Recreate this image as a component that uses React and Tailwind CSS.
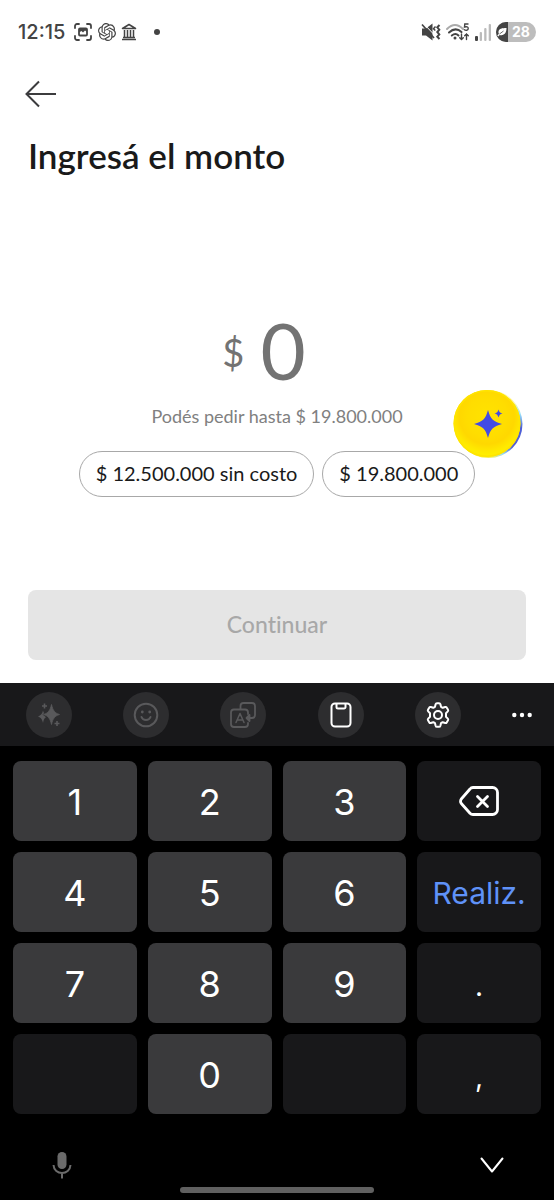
import React from "react";
import { SiOpenai } from "react-icons/si";

const CaptureIcon = () => (
  <svg width="20" height="20" viewBox="0 0 20 20" fill="none" stroke="#444" strokeWidth="1.800" strokeLinecap="round" aria-hidden="true">
    <path d="M2 6V4a2 2 0 0 1 2-2h2M14 2h2a2 2 0 0 1 2 2v2M18 14v2a2 2 0 0 1-2 2h-2M6 18H4a2 2 0 0 1-2-2v-2" />
    <rect x="6" y="6.500" width="8" height="7" rx="1" fill="#fff" />
    <path d="M6 7h8v3l-2-1.500-2 2-1.500-1.500-2.500 1.500z" fill="#444" stroke="none" />
  </svg>
);

const BankIcon = () => (
  <svg width="16" height="18" viewBox="0 0 16 18" fill="none" stroke="#444" aria-hidden="true">
    <path d="M1.500 5.500 8 1.500l6.500 4z" strokeWidth="1.500" strokeLinejoin="round" />
    <path d="M3.500 7v7M6.500 7v7M9.500 7v7M12.500 7v7" strokeWidth="1.500" />
    <path d="M2 14.500h12M1 16.500h14" strokeWidth="1.300" />
  </svg>
);

const MuteIcon = () => (
  <svg width="20" height="20" viewBox="0 0 20 20" fill="none" stroke="#444" aria-hidden="true">
    <path d="M1 6.500h4l6.500-5v17L5 13.500H1z" fill="#444" stroke="none" />
    <path d="M2.500 1.500l10.500 11" stroke="#fff" strokeWidth="1" />
    <path d="M1 2.500l12 13.500" strokeWidth="1.700" />
    <path d="M14.500 4.500l-2 2.200 1.800 1.800" strokeWidth="1.500" />
    <path d="M18.500 3l-2.200 2.300 2 2.400-2 2.300 2 2.400-2 2.300 2.200 2.300" strokeWidth="2" />
  </svg>
);

const WifiIcon = () => (
  <svg width="26" height="20" viewBox="0 0 26 20" fill="none" strokeLinecap="round" aria-hidden="true">
    <path d="M2 7q8-8 16 0" stroke="#aaa" strokeWidth="2" />
    <path d="M4 10.500q6.500-6 12.500-.5M6.800 13.500q3.700-3 6.700 0" stroke="#444" strokeWidth="2" />
    <circle cx="10" cy="16" r="1.500" fill="#444" />
    <path d="M16.500 12v5.500M14.700 15.800l1.800 1.800 1.800-1.800M21.500 17.500V12M19.700 13.800l1.800-1.800 1.800 1.800" stroke="#444" strokeWidth="1.400" />
    <path d="M23 2h-3.200l-.3 3c3-.8 3.900.2 3.700 1.800-.3 1.600-2.400 2-3.800.9" stroke="#444" strokeWidth="1.400" />
  </svg>
);

const SignalIcon = () => (
  <svg width="17" height="18" viewBox="0 0 17 18" aria-hidden="true">
    <rect x="0" y="13" width="3" height="5" rx="1" fill="#444" />
    <rect x="4.700" y="9" width="2.300" height="9" rx="1" fill="#bbb" />
    <rect x="9.200" y="5" width="2.300" height="13" rx="1" fill="#bbb" />
    <rect x="13.700" y="1" width="2.300" height="17" rx="1" fill="#bbb" />
  </svg>
);

const LeafIcon = () => (
  <svg width="10" height="10" viewBox="0 0 10 10" aria-hidden="true">
    <path d="M9.500 1C5 1 2 1.500 1.500 4.500c-.2 1 0 1.600.4 2.200L.3 8.600l.9.800 1.500-1.500C7 9 9.500 6 9.500 1z" fill="#fff" />
    <path d="M2.500 7 6.500 4" stroke="#444" strokeWidth=".8" />
  </svg>
);

const BackIcon = () => (
  <svg width="32" height="28" viewBox="0 0 32 28" fill="none" stroke="#3c3c3e" strokeWidth="2" aria-hidden="true">
    <path d="M32 14H2.500M15 1.500 2.500 14 15 26.500" />
  </svg>
);

const AssistantIcon = () => (
  <svg width="70" height="70" viewBox="0 0 70 70" aria-hidden="true">
    <defs>
      <radialGradient id="coin" cx=".5" cy=".4" r=".6">
        <stop offset="0" stopColor="#ffe300" />
        <stop offset=".5" stopColor="#ffdd00" />
        <stop offset=".68" stopColor="#ffd800" />
        <stop offset=".85" stopColor="#ffe800" />
        <stop offset="1" stopColor="#fff200" />
      </radialGradient>
      <linearGradient id="edge" x1=".7" y1="0" x2=".55" y2="1">
        <stop offset=".15" stopColor="#fff6a0" />
        <stop offset=".3" stopColor="#9be4fa" />
        <stop offset=".5" stopColor="#4c5fd8" />
        <stop offset=".8" stopColor="#5560d0" />
        <stop offset=".92" stopColor="#9bdcf5" />
        <stop offset="1" stopColor="#f4ee60" />
      </linearGradient>
    </defs>
    <circle cx="35.500" cy="35" r="34" fill="url(#edge)" />
    <circle cx="34" cy="34.500" r="33.500" fill="url(#coin)" />
    <circle cx="34" cy="34.500" r="32.700" fill="none" stroke="#ffe400" strokeWidth="1.500" />
    <path d="M35 21c2.500 9 5 11.500 14 14-9 2.500-11.500 5-14 14-2.500-9-5-11.500-14-14 9-2.500 11.500-5 14-14z" fill="#434be4" />
    <path d="M45.500 20.500c.8 2.700 1.500 3.300 4 4-2.500.8-3.200 1.500-4 4-.8-2.500-1.500-3.200-4-4 2.500-.7 3.200-1.300 4-4z" fill="#434be4" />
  </svg>
);

const SparklesIcon = () => (
  <svg width="26" height="26" viewBox="0 0 26 26" fill="#59595b" aria-hidden="true">
    <path d="M15.500 2.500c1.400 6 3.200 8.500 8 10-4.800 1.500-6.600 4-8 10-1.400-6-3.200-8.500-8-10 4.800-1.500 6.600-4 8-10z" strokeLinejoin="round" stroke="#59595b" strokeWidth=".8" />
    <path d="M7 8.500c.4 1.800.8 2.300 1.300 2.500L6.500 12.500l2 1.500 1.500 1.200c-1.700.8-2.300 2.500-3 5.800-.9-4-2-5.300-5-6.500 3-1.200 4.200-2.500 5-6z" />
    <path d="M8.500 1.500v5M6 4h5M21 19v5M18.500 21.500h5" stroke="#59595b" strokeWidth="1.600" />
  </svg>
);

const SmileIcon = () => (
  <svg width="26" height="26" viewBox="0 0 26 26" fill="none" stroke="#59595b" strokeWidth="2" strokeLinecap="round" aria-hidden="true">
    <circle cx="13" cy="13" r="11.300" />
    <path d="M8.500 15c1.500 4 7.500 4 9 0" />
    <circle cx="9.300" cy="10" r="1.400" fill="#59595b" stroke="none" />
    <circle cx="16.700" cy="10" r="1.400" fill="#59595b" stroke="none" />
  </svg>
);

const TranslateIcon = () => (
  <svg width="28" height="28" viewBox="0 0 28 28" fill="none" stroke="#59595b" strokeWidth="1.800" strokeLinecap="round" strokeLinejoin="round" aria-hidden="true">
    <path d="M11.500 8V5a3 3 0 0 1 3-3H23a3 3 0 0 1 3 3v9a3 3 0 0 1-3 3h-2.500" />
    <path d="M19 13v-1.500a3 3 0 0 0-3-3H5a3 3 0 0 0-3 3V23a3 3 0 0 0 3 3h11a3 3 0 0 0 3-3v-1" />
    <path d="M7 21.500 11 12.500l4 9M8.500 19h5" strokeWidth="1.500" />
    <path d="M20.500 14 17.500 17l3 3z" fill="#59595b" />
  </svg>
);

const ClipboardIcon = () => (
  <svg width="22" height="26" viewBox="0 0 22 26" fill="none" stroke="#fff" strokeWidth="2" strokeLinejoin="round" aria-hidden="true">
    <rect x="1.500" y="1.500" width="19" height="23" rx="3.500" />
    <path d="M6.500 2v3a1.500 1.500 0 0 0 1.500 1.500h6A1.500 1.500 0 0 0 15.500 5V2" />
  </svg>
);

const GearIcon = () => (
  <svg width="26" height="26" viewBox="0 0 26 26" fill="none" stroke="#fff" strokeWidth="2" strokeLinejoin="round" aria-hidden="true">
    <circle cx="13" cy="13" r="4" />
    <path d="M10.600 2.300q.3-1.100 1.400-1.100h2q1.100 0 1.400 1.100l.6 2.500 1.700 1 2.500-.8q1-.3 1.500.6l1.300 2.200q.5.900-.2 1.600L21 11.200v3.600l1.800 1.800q.7.700.2 1.600l-1.300 2.200q-.5.900-1.500.6l-2.500-.8-1.700 1-.6 2.500q-.3 1.100-1.400 1.100h-2q-1.100 0-1.400-1.100l-.6-2.500-1.700-1-2.500.8q-1 .3-1.500-.6L3 18.200q-.5-.9.2-1.600L5 14.800v-3.600L3.200 9.400Q2.500 8.700 3 7.800l1.300-2.200q.5-.9 1.500-.6l2.500.8 1.700-1z" />
  </svg>
);

const DotsIcon = () => (
  <svg width="20" height="6" viewBox="0 0 20 6" fill="#fff" aria-hidden="true">
    <circle cx="2.300" cy="3" r="2.200" />
    <circle cx="10" cy="3" r="2.200" />
    <circle cx="17.700" cy="3" r="2.200" />
  </svg>
);

const DeleteIcon = () => (
  <svg width="40" height="30" viewBox="0 0 40 30" fill="none" stroke="#fff" strokeWidth="2.800" strokeLinecap="round" strokeLinejoin="round" aria-hidden="true">
    <path d="M14 1.500h19.500a5 5 0 0 1 5 5v17a5 5 0 0 1-5 5H14a4 4 0 0 1-3-1.300L2.300 17.500q-1.500-2 0-4.500L11 3a4 4 0 0 1 3-1.500z" />
    <path d="M18.500 10.500l10 10M28.500 10.500l-10 10" />
  </svg>
);

const MicIcon = () => (
  <svg width="20" height="28" viewBox="0 0 20 28" fill="none" stroke="#6b6b6b" strokeWidth="2" aria-hidden="true">
    <rect x="5.500" y="1" width="9" height="17" rx="4.500" fill="#6b6b6b" stroke="none" />
    <path d="M1.500 14c.5 10.500 16.500 10.500 17 0M10 22v5.500" />
  </svg>
);

const ChevronIcon = () => (
  <svg width="24" height="16" viewBox="0 0 24 16" fill="none" stroke="#fff" strokeWidth="2" strokeLinecap="round" strokeLinejoin="round" aria-hidden="true">
    <path d="M1.500 1.500 12 14.500 22.500 1.500" />
  </svg>
);

const tools = [
  { label: "Asistente de escritura", icon: <SparklesIcon />, disabled: true },
  { label: "Emojis", icon: <SmileIcon />, disabled: true },
  { label: "Traducir", icon: <TranslateIcon />, disabled: true },
  { label: "Portapapeles", icon: <ClipboardIcon /> },
  { label: "Ajustes del teclado", icon: <GearIcon /> },
];

const keys = [
  { text: "1" }, { text: "2" }, { text: "3" },
  { label: "Borrar", icon: <DeleteIcon />, kind: "function" },
  { text: "4" }, { text: "5" }, { text: "6" },
  { text: "Realiz.", kind: "action" },
  { text: "7" }, { text: "8" }, { text: "9" },
  { text: ".", kind: "symbol" },
  { label: "Vacía izquierda", kind: "function", disabled: true },
  { text: "0" },
  { label: "Vacía derecha", kind: "function", disabled: true },
  { text: ",", kind: "symbol" },
];

const keyStyles = {
  digit: "bg-[#3a3a3c] pt-[2px] text-4xl text-white",
  function: "bg-[#18181a]",
  action: "bg-[#18181a] pt-[2px] text-[30px] text-[#5f92f8]",
  symbol: "bg-[#18181a] pt-[6px] text-[28px] text-white",
};

function Key({ text, label, icon, kind = "digit", disabled }) {
  return (
    <button
      type="button"
      aria-label={label}
      disabled={disabled}
      className={`flex h-20 items-center justify-center rounded-lg ${keyStyles[kind]}`}
    >
      {icon || text}
    </button>
  );
}

function StatusBar() {
  return (
    <div className="flex h-16 items-center justify-between px-[18px] font-['Inter',sans-serif] text-[#444]">
      <div className="flex items-center gap-2">
        <span className="text-xl font-medium">12:15</span>
        <div className="flex items-center gap-[5px]">
          <CaptureIcon />
          <SiOpenai size={18} aria-hidden="true" />
          <BankIcon />
          <span className="ml-3 size-[6px] rounded-full bg-[#444]" />
        </div>
      </div>
      <div className="flex items-center gap-1">
        <MuteIcon />
        <WifiIcon />
        <SignalIcon />
        <div className="flex h-5 w-10 items-center overflow-hidden rounded-full bg-[#bdbdbd]">
          <span className="flex h-full w-3 items-center justify-center bg-[#444]">
            <LeafIcon />
          </span>
          <span className="flex-1 pl-1 text-sm font-bold text-white">28</span>
        </div>
      </div>
    </div>
  );
}

function Keyboard() {
  return (
    <section aria-label="Teclado" className="bg-black font-['Inter',sans-serif]">
      <div className="flex h-[63px] items-center justify-between bg-[#18181a] pr-[22px] pl-[26px]">
        {tools.map((tool) => (
          <button
            key={tool.label}
            type="button"
            aria-label={tool.label}
            disabled={tool.disabled}
            className="flex size-[46px] items-center justify-center rounded-full bg-[#2d2d2f]"
          >
            {tool.icon}
          </button>
        ))}
        <button type="button" aria-label="Más opciones" className="flex h-[46px] items-center">
          <DotsIcon />
        </button>
      </div>
      <div className="grid grid-cols-4 gap-[11px] px-[13px] pt-[15px]">
        {keys.map((key) => (
          <Key key={key.text || key.label} {...key} />
        ))}
      </div>
      <div className="flex items-center justify-between px-[50px] pt-[37px]">
        <button type="button" aria-label="Dictar" className="flex w-6 justify-center">
          <MicIcon />
        </button>
        <button type="button" aria-label="Ocultar teclado">
          <ChevronIcon />
        </button>
      </div>
      <div className="flex justify-center pt-2 pb-[7px]">
        <span className="h-[6px] w-[35%] rounded-full bg-[#606060]" />
      </div>
    </section>
  );
}

export default function App() {
  return (
    <div className="flex min-h-screen flex-col bg-white">
      <StatusBar />
      <main className="flex flex-1 flex-col font-['Lato',sans-serif] text-[#1a1a1a] [font-variant-ligatures:none]">
        <header className="px-6 pt-4">
          <button type="button" aria-label="Volver" className="flex">
            <BackIcon />
          </button>
          <h1 className="pt-[27px] pl-1 text-[35px] leading-10 font-semibold">Ingresá el monto</h1>
        </header>
        <div className="relative flex flex-col items-center pt-[135px]">
          <label className="flex h-20 items-center gap-4 pr-[26px] text-[#737373]">
            <span className="pt-1 text-[38px] leading-none">$</span>
            <input
              aria-label="Monto"
              inputMode="numeric"
              placeholder="0"
              className="field-sizing-content h-20 bg-transparent text-[78px] leading-none outline-none placeholder:text-[#737373]"
            />
          </label>
          <p className="pt-3 text-lg leading-7 text-[#808080]">Podés pedir hasta $ 19.800.000</p>
          <div className="flex gap-2 pt-[21px] text-xl">
            <button type="button" className="h-[46px] rounded-full border border-[#a8a8a8] px-4 pb-[2px]">
              $ 12.500.000 sin costo
            </button>
            <button type="button" className="h-[46px] rounded-full border border-[#a8a8a8] px-4 pb-[2px]">
              $ 19.800.000
            </button>
          </div>
          <button type="button" aria-label="Asistente" className="absolute right-[31px] bottom-[38px] rounded-full">
            <AssistantIcon />
          </button>
        </div>
        <div className="mt-auto px-7 pb-[23px]">
          <button type="button" disabled className="h-[70px] w-full rounded-lg bg-[#e5e5e5] pb-[2px] text-[23px] font-medium text-[#a8a8a8]">
            Continuar
          </button>
        </div>
      </main>
      <Keyboard />
    </div>
  );
}
